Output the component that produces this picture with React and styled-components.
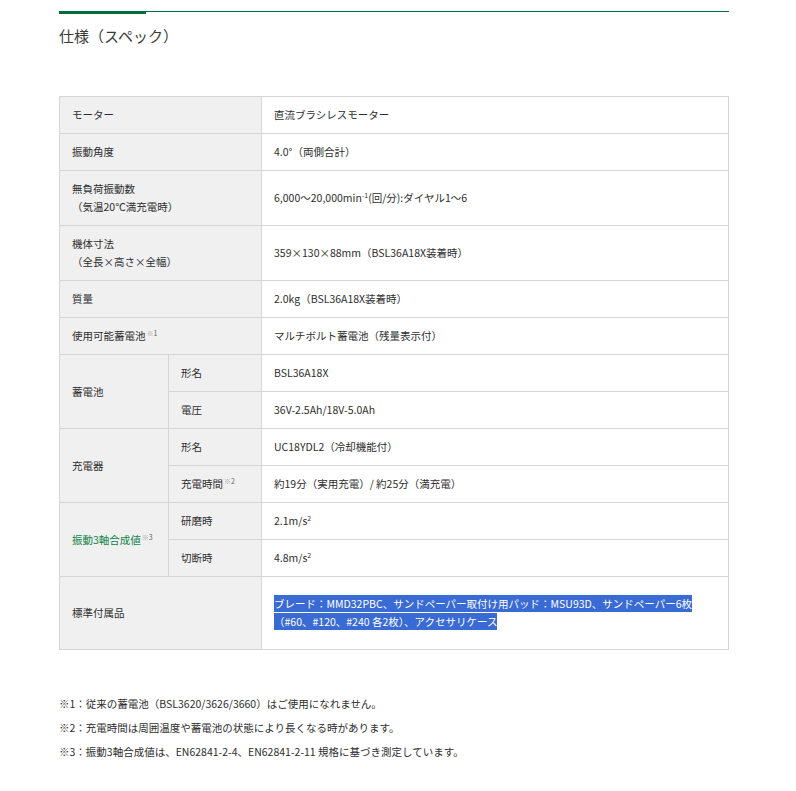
import React from "react";
import styled, { createGlobalStyle } from "styled-components";

const Global = createGlobalStyle`
  html, body { margin: 0; padding: 0; background: #fff; }
  body {
    font-family: "Noto Sans CJK JP", "Noto Sans", sans-serif;
    color: #333;
  }
`;

const Page = styled.div`
  width: 670px;
  margin-left: 59px;
  padding-top: 11px;
  padding-bottom: 30px;
`;

const Rule = styled.div`
  display: flex;
  align-items: flex-start;
`;

const ThickBar = styled.div`
  width: 87px;
  height: 3px;
  background: #006e3c;
`;

const ThinLine = styled.div`
  flex: 1;
  height: 1px;
  background: #006e3c;
`;

const Title = styled.h2`
  margin: 10px 0 0;
  font-size: 15px;
  font-weight: 400;
  line-height: 24px;
  color: #3a3a3a;
`;

const Table = styled.table`
  margin-top: 48px;
  width: 670px;
  border-collapse: collapse;
  table-layout: fixed;
  font-size: 10.5px;
  line-height: 18px;
`;

const Cell = styled.td`
  border: 1px solid #d5d5d5;
  padding: ${(p) => (p.$tall ? "18px 12px" : "9px 12px")};
  vertical-align: middle;
  text-align: left;
  font-weight: 400;
  background: ${(p) => (p.$head ? "#f0f0f0" : "#fff")};
  color: ${(p) => (p.$green ? "#10844a" : "#2e2e2e")};
`;

const Note = styled.sup`
  font-size: 7px;
  line-height: 0;
  vertical-align: 4px;
  color: #aaa;
  margin-left: 1px;
  & b {
    font-weight: 400;
    color: #666;
  }
`;

const Sup = styled.sup`
  font-size: 7px;
  line-height: 0;
  vertical-align: 4px;
`;

const Selected = styled.span`
  background: #3a6bd4;
  color: #fff;
  padding: 1px 0;
`;

const Notes = styled.div`
  margin-top: 42px;
  font-size: 10.5px;
  line-height: 24px;
  color: #2e2e2e;
`;

const NoteLine = styled.p`
  margin: 0;
`;

const Mark = ({ n }) => (
  <Note>
    ※<b>{n}</b>
  </Note>
);

export default function App() {
  return (
    <>
      <Global />
      <Page>
        <Rule>
          <ThickBar />
          <ThinLine />
        </Rule>
        <Title>仕様（スペック）</Title>
        <Table>
          <colgroup>
            <col style={{ width: 109 }} />
            <col style={{ width: 93 }} />
            <col />
          </colgroup>
          <tbody>
            <tr>
              <Cell as="th" $head colSpan={2}>モーター</Cell>
              <Cell>直流ブラシレスモーター</Cell>
            </tr>
            <tr>
              <Cell as="th" $head colSpan={2}>振動角度</Cell>
              <Cell>4.0°（両側合計）</Cell>
            </tr>
            <tr>
              <Cell as="th" $head colSpan={2}>
                無負荷振動数
                <br />
                （気温20℃満充電時）
              </Cell>
              <Cell>
                6,000～20,000min<Sup>-1</Sup>(回/分):ダイヤル1～6
              </Cell>
            </tr>
            <tr>
              <Cell as="th" $head colSpan={2}>
                機体寸法
                <br />
                （全長×高さ×全幅）
              </Cell>
              <Cell>359×130×88mm（BSL36A18X装着時）</Cell>
            </tr>
            <tr>
              <Cell as="th" $head colSpan={2}>質量</Cell>
              <Cell>2.0kg（BSL36A18X装着時）</Cell>
            </tr>
            <tr>
              <Cell as="th" $head colSpan={2}>
                使用可能蓄電池<Mark n="1" />
              </Cell>
              <Cell>マルチボルト蓄電池（残量表示付）</Cell>
            </tr>
            <tr>
              <Cell as="th" $head rowSpan={2}>蓄電池</Cell>
              <Cell as="th" $head>形名</Cell>
              <Cell>BSL36A18X</Cell>
            </tr>
            <tr>
              <Cell as="th" $head>電圧</Cell>
              <Cell>36V-2.5Ah/18V-5.0Ah</Cell>
            </tr>
            <tr>
              <Cell as="th" $head rowSpan={2}>充電器</Cell>
              <Cell as="th" $head>形名</Cell>
              <Cell>UC18YDL2（冷却機能付）</Cell>
            </tr>
            <tr>
              <Cell as="th" $head>
                充電時間<Mark n="2" />
              </Cell>
              <Cell>約19分（実用充電）/ 約25分（満充電）</Cell>
            </tr>
            <tr>
              <Cell as="th" $head $green rowSpan={2}>
                振動3軸合成値<Mark n="3" />
              </Cell>
              <Cell as="th" $head>研磨時</Cell>
              <Cell>
                2.1m/s<Sup>2</Sup>
              </Cell>
            </tr>
            <tr>
              <Cell as="th" $head>切断時</Cell>
              <Cell>
                4.8m/s<Sup>2</Sup>
              </Cell>
            </tr>
            <tr>
              <Cell as="th" $head colSpan={2}>標準付属品</Cell>
              <Cell $tall>
                <Selected>
                  ブレード：MMD32PBC、サンドペーパー取付け用パッド：MSU93D、サンドペーパー6枚
                  <br />
                  （#60、#120、#240 各2枚）、アクセサリケース
                </Selected>
              </Cell>
            </tr>
          </tbody>
        </Table>
        <Notes>
          <NoteLine>※1：従来の蓄電池（BSL3620/3626/3660）はご使用になれません。</NoteLine>
          <NoteLine>※2：充電時間は周囲温度や蓄電池の状態により長くなる時があります。</NoteLine>
          <NoteLine>※3：振動3軸合成値は、EN62841-2-4、EN62841-2-11 規格に基づき測定しています。</NoteLine>
        </Notes>
      </Page>
    </>
  );
}
